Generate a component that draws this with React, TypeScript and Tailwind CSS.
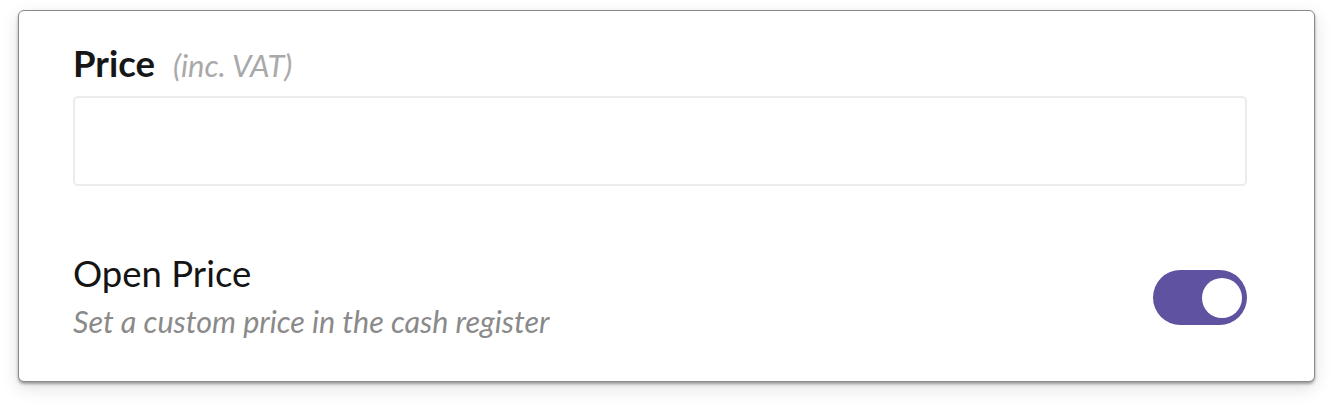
export default function App() {
  return (
    <div className="min-h-[408px] bg-white pt-[10px] pl-[18px] pr-[19px] font-['Lato','Noto_Sans',sans-serif]">
      <div className="rounded-[6px] border border-[#8a8a8a] bg-white pl-[54px] pr-[67px] pt-[31px] pb-[42px] shadow-[0_2px_3px_rgba(0,0,0,0.35),0_6px_18px_rgba(0,0,0,0.12)]">
        {/* Price field */}
        <label className="flex items-baseline gap-[18px] leading-[42px]">
          <span className="text-[36.5px] font-bold text-[#161616]">Price</span>
          <span className="text-[31px] italic text-[#a9a9a9]">(inc. VAT)</span>
        </label>
        <input
          type="text"
          className="mt-[10px] block h-[90px] w-full rounded-[5px] border-2 border-[#ececec] bg-white px-4 text-[28px] outline-none"
        />

        {/* Open price toggle */}
        <div className="mt-[66px] flex items-center justify-between">
          <div>
            <div className="text-[36.5px] leading-[42px] text-[#141414]">Open Price</div>
            <div className="mt-[9px] text-[30.5px] italic leading-[36px] text-[#8a8a8a]">
              Set a custom price in the cash register
            </div>
          </div>
          <button
            type="button"
            aria-pressed="true"
            className="mt-[4px] flex h-[55px] w-[94px] items-center justify-end rounded-full bg-[#5e52a1] pr-[5px]"
          >
            <span className="h-[40px] w-[40px] rounded-full bg-white" />
          </button>
        </div>
      </div>
    </div>
  );
}
